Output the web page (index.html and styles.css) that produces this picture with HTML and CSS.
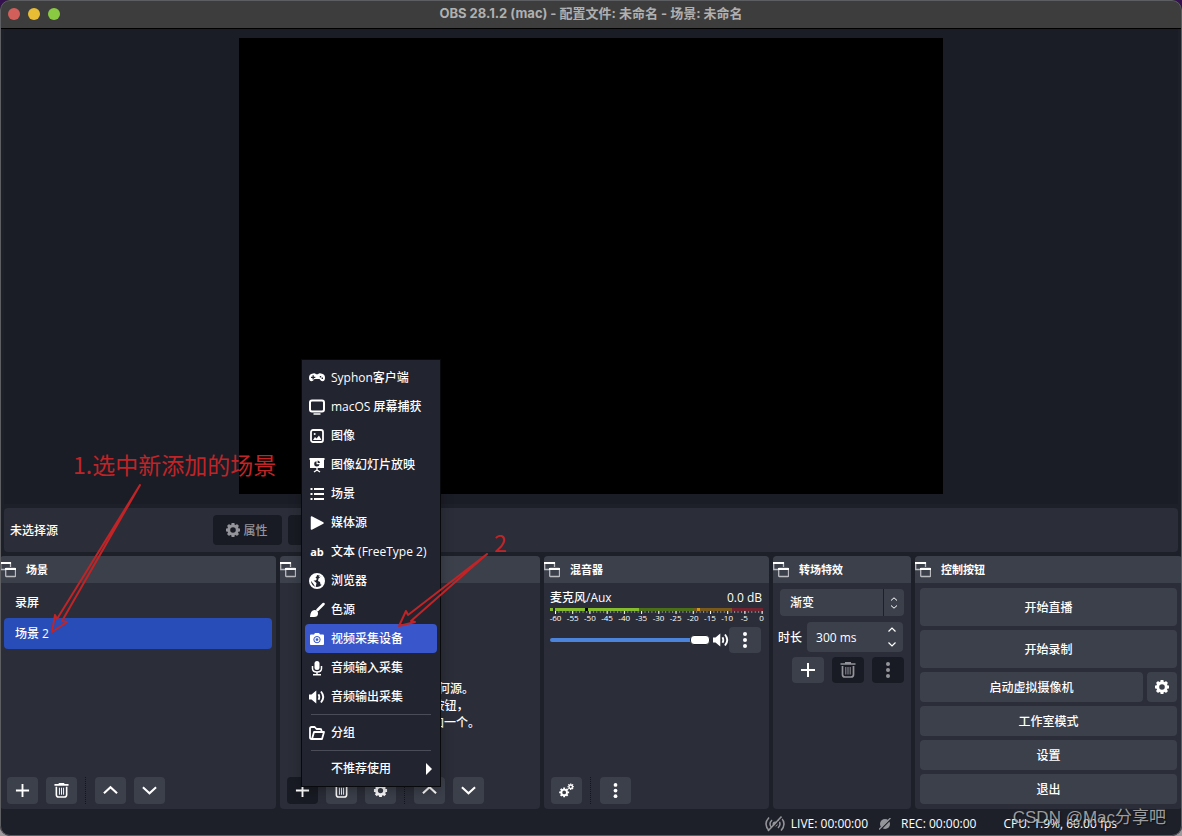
FILE: index.html
```html
<!DOCTYPE html>
<html lang="zh-CN">
<head>
<meta charset="utf-8">
<title>OBS 28.1.2 (mac)</title>
<link rel="stylesheet" href="styles.css">
</head>
<body>
<svg class="defs" aria-hidden="true">
  <defs>
    <symbol id="plus" viewBox="0 0 16 16"><path d="M8 1v14M1 8h14" fill="none" stroke="currentColor" stroke-width="2"/></symbol>
    <symbol id="trash" viewBox="0 0 16 16"><path d="M.5 2h15M5 .8h6M2.500 4v8.500q0 2.500 2.500 2.500h6q2.500 0 2.500-2.500V4" fill="none" stroke="currentColor" stroke-width="1.700"/><path d="M5.800 5v7.500M8 5v7.500M10.200 5v7.500" stroke="currentColor" stroke-width="1"/></symbol>
    <symbol id="up" viewBox="0 0 16 16"><path d="M1 11 8 4.500l7 6.500" fill="none" stroke="currentColor" stroke-width="2.200"/></symbol>
    <symbol id="down" viewBox="0 0 16 16"><path d="M1 4.500 8 11l7-6.500" fill="none" stroke="currentColor" stroke-width="2.200"/></symbol>
    <symbol id="dots" viewBox="0 0 16 16"><g fill="currentColor"><circle cx="8" cy="2" r="2"/><circle cx="8" cy="8" r="2"/><circle cx="8" cy="14" r="2"/></g></symbol>
    <symbol id="gear" viewBox="0 0 16 16"><circle cx="8" cy="8" r="4.300" fill="none" stroke="currentColor" stroke-width="3"/><path d="M8 1v2.500M8 12.500V15M1 8h2.500M12.500 8H15M3 3l1.800 1.800M11.200 11.200 13 13M3 13l1.800-1.800M11.200 4.800 13 3" stroke="currentColor" stroke-width="3"/></symbol>
    <symbol id="gears" viewBox="0 0 16 16"><circle cx="5.500" cy="10" r="3" fill="none" stroke="currentColor" stroke-width="2"/><path d="M5.500 4.700v2M5.500 13.300v2M.2 10h2M8.800 10h2M1.800 6.300l1.400 1.400M7.800 12.300l1.400 1.400M1.800 13.700l1.400-1.400M7.800 7.700l1.400-1.400" stroke="currentColor" stroke-width="2"/><circle cx="12.500" cy="4" r="1.900" fill="none" stroke="currentColor" stroke-width="1.400"/><path d="M12.500.5v1.400M12.500 6.100v1.400M9 4h1.400M14.600 4H16M10 1.500l1 1M14 5.500l1 1M10 6.500l1-1M14 2.500l1-1" stroke="currentColor" stroke-width="1.300"/></symbol>
    <symbol id="float" viewBox="0 0 16 16"><path d="M5 7.500H.7V1h9.800v4" fill="none" stroke="#b9bbc0" stroke-width="1.300"/><path d="M0 1h11" stroke="#fff" stroke-width="2"/><rect x="5.700" y="6.500" width="9.800" height="8" rx=".5" fill="none" stroke="#b9bbc0" stroke-width="1.300"/><path d="M5 7h11" stroke="#fff" stroke-width="2"/></symbol>
    <symbol id="speaker" viewBox="0 0 16 16"><path d="M0 5.500h2.500L7.300 1.500v13L2.500 10.500H0z" fill="currentColor"/><path d="M9.500 5.200q1.600 2.800 0 5.600M12 2.500q4.500 5.500 0 11" fill="none" stroke="currentColor" stroke-width="1.900"/></symbol>
  </defs>
</svg>
<div class="window">
  <header class="titlebar">
    <div class="lights"><i class="light red"></i><i class="light yellow"></i><i class="light green"></i></div>
    <h1>OBS 28.1.2 (mac) - 配置文件: 未命名 - 场景: 未命名</h1>
  </header>

  <main class="workspace">
    <section class="preview"><div class="canvas"></div></section>

    <section class="context">
      <span class="context-name">未选择源</span>
      <button class="btn context-btn" disabled><svg class="icon"><use href="#gear"/></svg>属性</button>
      <button class="btn context-btn" disabled><svg class="icon"><use href="#gear"/></svg>滤镜</button>
    </section>

    <div class="docks">
      <section class="dock">
        <h2><svg class="icon"><use href="#float"/></svg>场景</h2>
        <ul class="scenes"><li>录屏</li><li class="selected">场景 2</li></ul>
        <div class="toolbar">
          <button class="btn tool" aria-label="添加"><svg class="icon"><use href="#plus"/></svg></button>
          <button class="btn tool" aria-label="移除"><svg class="icon"><use href="#trash"/></svg></button>
          <i class="divider"></i>
          <button class="btn tool" aria-label="上移"><svg class="icon"><use href="#up"/></svg></button>
          <button class="btn tool" aria-label="下移"><svg class="icon"><use href="#down"/></svg></button>
        </div>
      </section>

      <section class="dock sources">
        <h2><svg class="icon"><use href="#float"/></svg>来源</h2>
        <p class="empty">您还没有添加任何源。<br>点击下面的 + 按钮，<br>或者右击此处添加一个。</p>
        <div class="toolbar">
          <button class="btn tool pressed" aria-label="添加"><svg class="icon"><use href="#plus"/></svg></button>
          <button class="btn tool" aria-label="移除"><svg class="icon"><use href="#trash"/></svg></button>
          <button class="btn tool" aria-label="属性"><svg class="icon"><use href="#gear"/></svg></button>
          <i class="divider"></i>
          <button class="btn tool" aria-label="上移"><svg class="icon"><use href="#up"/></svg></button>
          <button class="btn tool" aria-label="下移"><svg class="icon"><use href="#down"/></svg></button>
        </div>
        <div class="menu" role="menu">
          <button role="menuitem"><svg class="icon" viewBox="0 0 16 16"><path fill="currentColor" fill-rule="evenodd" d="M4 3.500q2-.5 3 .7h2q1-1.200 3-.7 4 .5 4 4.300 0 3.400-2.500 3.400-1.500 0-3-2.200h-5q-1.500 2.200-3 2.200Q0 11.200 0 7.800 0 4 4 3.500zM3.500 5.300v1.500H2V8h1.500v1.500h1.300V8h1.500V6.800H4.800V5.300zM10.800 6v1.500h1.400V6zM12.600 7.500V9H14V7.500z"/></svg>Syphon客户端</button>
          <button role="menuitem"><svg class="icon" viewBox="0 0 16 16"><rect x="1" y="1.500" width="14" height="11" rx="2" fill="none" stroke="currentColor" stroke-width="2"/><path d="M4.500 15h7" stroke="currentColor" stroke-width="1.500"/></svg>macOS 屏幕捕获</button>
          <button role="menuitem"><svg class="icon" viewBox="0 0 16 16"><rect x="2" y="2" width="12" height="12" rx="2" fill="none" stroke="currentColor" stroke-width="1.800"/><circle cx="5.700" cy="6" r="1" fill="currentColor"/><path d="m4 12 2-3 1.500 1.500L10 7.500l2.500 4.500z" fill="currentColor"/></svg>图像</button>
          <button role="menuitem"><svg class="icon" viewBox="0 0 16 16"><path d="M.5 1h15v2H15v8H1V3H.5z" fill="currentColor"/><path d="M8 11v3M5 15l3-2 3 2" fill="none" stroke="currentColor" stroke-width="1.400"/><path d="M7.500 4.200v3h3a2.700 2.700 0 1 1-3-3z" fill="#222430"/><path d="M8.600 3.400q2.200.3 2.500 2.600H8.600z" fill="#222430"/></svg>图像幻灯片放映</button>
          <button role="menuitem"><svg class="icon" viewBox="0 0 16 16"><path d="M5 3h10M5 8h10M5 13h10M1.500 3h2M1.500 8h2M1.500 13h2" stroke="currentColor" stroke-width="1.900"/></svg>场景</button>
          <button role="menuitem"><svg class="icon" viewBox="0 0 16 16"><path d="M2.500 2v12L14 8z" fill="currentColor" stroke="currentColor" stroke-width="1.500" stroke-linejoin="round"/></svg>媒体源</button>
          <button role="menuitem"><span class="icon ab">ab</span>文本 (FreeType 2)</button>
          <button role="menuitem"><svg class="icon" viewBox="0 0 16 16"><circle cx="8" cy="8" r="7" fill="none" stroke="currentColor" stroke-width="2"/><path d="M2 4Q4 1 7.500 1L8 3 6.500 4.500 8 6 6.500 7.500H4.500l3 2.500-1 4.500L4.500 11 2 8zM9.500 3l4 .5L15 8l-1.500 4-2-.5-.5-2.500L9 8l.5-2.500 1.500-1z" fill="currentColor"/></svg>浏览器</button>
          <button role="menuitem"><svg class="icon" viewBox="0 0 16 16"><path d="M1 15q.5-7 4.500-7Q9 8 9 11.500 9 15 5 15z" fill="currentColor"/><path d="M8.500 8 14.500 2" stroke="currentColor" stroke-width="2.500" stroke-linecap="round"/></svg>色源</button>
          <button role="menuitem" class="active"><svg class="icon" viewBox="0 0 16 16"><path fill="currentColor" fill-rule="evenodd" d="M2 3.500h3L6 2h4l1 1.500h3q1 0 1 1V13q0 1-1 1H2q-1 0-1-1V4.500q0-1 1-1zM8 5a3.600 3.600 0 1 0 .01 0z"/><circle cx="8" cy="8.600" r="2" fill="none" stroke="currentColor" stroke-width="1.200"/></svg>视频采集设备</button>
          <button role="menuitem"><svg class="icon" viewBox="0 0 16 16"><rect x="5.500" y="1" width="5" height="9" rx="2.500" fill="currentColor"/><path d="M3.500 6v2.500q0 3.500 4.500 3.500t4.500-3.500V6M8 12v3M4 14.700h8" fill="none" stroke="currentColor" stroke-width="1.500"/></svg>音频输入采集</button>
          <button role="menuitem"><svg class="icon"><use href="#speaker"/></svg>音频输出采集</button>
          <hr>
          <button role="menuitem"><svg class="icon" viewBox="0 0 16 16"><path d="M3 14H2.500Q1 14 1 12.500V3.500Q1 2 2.500 2h3.200l1.800 2H11q1.500 0 1.500 1.500V7M3 14l2-7h10l-2 7z" fill="none" stroke="currentColor" stroke-width="1.800" stroke-linejoin="round"/></svg>分组</button>
          <hr>
          <button role="menuitem"><span class="icon"></span>不推荐使用<svg class="submenu" viewBox="0 0 6 12"><path d="M0 0v12l6-6z" fill="currentColor"/></svg></button>
        </div>
      </section>

      <section class="dock">
        <h2><svg class="icon"><use href="#float"/></svg>混音器</h2>
        <div class="mixer">
          <div class="mixer-head"><label for="volume">麦克风/Aux</label><span>0.0 dB</span></div>
          <svg class="meter" viewBox="0 0 213 6" preserveAspectRatio="none" aria-hidden="true">
            <defs><pattern id="minor" x="5" width="3.444" height="6" patternUnits="userSpaceOnUse"><path d="M.5 3v2" stroke="#858790"/></pattern><pattern id="major" x="5" width="17.220" height="6" patternUnits="userSpaceOnUse"><path d="M.5 3v3" stroke="#fff"/></pattern></defs>
            <path fill="#84bc2e" d="M0 0h89v3H0z"/><path fill="#4c7019" d="M89 0h55v3H89z"/><path fill="#795a1c" d="M144 0h38v3h-38z"/><path fill="#712330" d="M182 0h31v3h-31z"/><path fill="#d49a12" d="M147 0h3v3h-3z"/><path fill="#000" d="M35 0h3v3h-3z"/><path fill="#22242d" d="M3 0h2v3H3z"/>
            <path fill="url(#minor)" d="M5 3h208v3H5z"/><path fill="url(#major)" d="M5 3h208v3H5z"/>
          </svg>
          <div class="scale"><span>-60</span><span>-55</span><span>-50</span><span>-45</span><span>-40</span><span>-35</span><span>-30</span><span>-25</span><span>-20</span><span>-15</span><span>-10</span><span>-5</span><span>0</span></div>
          <div class="volume">
            <input id="volume" type="range" min="0" max="100" value="100">
            <button class="mute" aria-label="静音"><svg class="icon"><use href="#speaker"/></svg></button>
            <button class="btn more" aria-label="更多"><svg class="icon"><use href="#dots"/></svg></button>
          </div>
        </div>
        <div class="toolbar">
          <button class="btn tool" aria-label="高级音频属性"><svg class="icon"><use href="#gears"/></svg></button>
          <i class="divider"></i>
          <button class="btn tool" aria-label="菜单"><svg class="icon"><use href="#dots"/></svg></button>
        </div>
      </section>

      <section class="dock">
        <h2><svg class="icon"><use href="#float"/></svg>转场特效</h2>
        <div class="transitions">
          <div class="combo">
            <select aria-label="转场特效"><option>渐变</option></select>
            <span class="combo-arrows"><svg viewBox="0 0 8 12"><path d="M1 3.500 4 .8l3 2.700M1 8.500l3 2.700 3-2.700" fill="none" stroke="currentColor"/></svg></span>
          </div>
          <div class="duration">
            <label for="duration">时长</label>
            <div class="spin">
              <input id="duration" type="text" value="300 ms">
              <div class="steps">
                <button aria-label="增加"><svg viewBox="0 0 8 5"><path d="M.5 4.500 4 1l3.500 3.500" fill="none" stroke="currentColor" stroke-width="1.200"/></svg></button>
                <button aria-label="减少"><svg viewBox="0 0 8 5"><path d="M.5.5 4 4 7.500.5" fill="none" stroke="currentColor" stroke-width="1.200"/></svg></button>
              </div>
            </div>
          </div>
          <div class="transition-tools">
            <button class="btn" aria-label="添加"><svg class="icon"><use href="#plus"/></svg></button>
            <button class="btn" disabled aria-label="移除"><svg class="icon"><use href="#trash"/></svg></button>
            <button class="btn" disabled aria-label="更多"><svg class="icon"><use href="#dots"/></svg></button>
          </div>
        </div>
      </section>

      <section class="dock">
        <h2><svg class="icon"><use href="#float"/></svg>控制按钮</h2>
        <div class="controls">
          <button class="btn tall">开始直播</button>
          <button class="btn tall">开始录制</button>
          <div class="pair"><button class="btn">启动虚拟摄像机</button><button class="btn square" aria-label="虚拟摄像机设置"><svg class="icon"><use href="#gear"/></svg></button></div>
          <button class="btn">工作室模式</button>
          <button class="btn">设置</button>
          <button class="btn">退出</button>
        </div>
      </section>
    </div>
  </main>

  <footer class="status">
    <span class="live"><svg viewBox="0 0 20 16"><path d="M4 1.500q-6 6.500 0 13M7 4q-4 4 0 8M16 1.500q6 6.500 0 13M13 4q4 4 0 8" fill="none" stroke="currentColor" stroke-width="1.500"/><circle cx="10" cy="8" r="2.500" fill="currentColor"/><path d="M4 16 17.500 1.500" stroke="#1e2029" stroke-width="1.500"/><path d="M3 15 16.500.5" stroke="currentColor" stroke-width="1.500"/></svg>LIVE: 00:00:00</span>
    <span class="rec"><svg viewBox="0 0 12 12"><circle cx="6" cy="6" r="5" fill="currentColor"/><path d="M1 12 12 1" stroke="#1e2029" stroke-width="1.500"/><path d="M0 11.500 11.500 0" stroke="currentColor" stroke-width="1.300"/></svg>REC: 00:00:00</span>
    <span class="cpu">CPU: 1.9%, 60.00 fps</span>
  </footer>

  <div class="note note-one">1.选中新添加的场景</div>
  <svg class="arrow arrow-one" viewBox="0 0 92 152" aria-hidden="true"><path d="M90 2 7 136l-2-4-3 17 15-10-5-1z"/></svg>
  <div class="note note-two">2</div>
  <svg class="arrow arrow-two" viewBox="0 0 94 76" aria-hidden="true"><path d="M89 3 10 64l-2-4-7 15 16-4-4-1z"/></svg>
  <div class="watermark">CSDN @Mac分享吧</div>
</div>
</body>
</html>
```

FILE: styles.css
```css
* { box-sizing: border-box; }
body {
  margin: 0;
  background: linear-gradient(#35124f, #a09a9c);
  color: #fff;
  font: 500 12px/17px "Open Sans", "Noto Sans CJK SC", sans-serif;
}
button, input, select { font: inherit; color: inherit; border: 0; margin: 0; padding: 0; background: none; }
h1, h2, p, ul { margin: 0; padding: 0; }
ul { list-style: none; }
.defs { position: absolute; width: 0; height: 0; }
.icon { width: 16px; height: 16px; flex: none; }

.window {
  position: relative;
  display: flex;
  flex-direction: column;
  min-height: 100vh;
  background: #1e2029;
  border-radius: 10px;
  overflow: hidden;
}
.window::after {
  content: "";
  position: absolute;
  inset: 0;
  border: 1px solid #5c5e62;
  border-radius: 10px;
  pointer-events: none;
}
.titlebar {
  position: relative;
  display: flex;
  align-items: center;
  justify-content: center;
  height: 29px;
  padding-bottom: 2px;
  background: #3d3d3d;
  border-bottom: 1px solid #000;
}
.titlebar h1 { font: 700 13px/18px Inter, "Noto Sans CJK SC", sans-serif; color: #b0b0b0; }
.lights { position: absolute; left: 8px; top: 8px; display: flex; gap: 8px; }
.light { width: 12px; height: 12px; border-radius: 50%; }
.red { background: #d35f5a; }
.yellow { background: #e8bd35; }
.green { background: #8aca42; }

.workspace { flex: 1; display: flex; flex-direction: column; gap: 4px; }
.preview {
  flex: 1;
  display: flex;
  justify-content: center;
  margin: 0 4px;
  padding: 9px 0 10px;
  background: #1b1d26;
}
.canvas { width: 60%; background: #000; }
.context {
  display: flex;
  align-items: center;
  gap: 6px;
  margin: 0 4px;
  padding: 7px 6px;
  background: #2b2d38;
  border-radius: 4px;
}
.context-name { width: 197px; }
.btn {
  display: flex;
  align-items: center;
  justify-content: center;
  height: 30px;
  background: #3c404b;
  border-radius: 4px;
}
.btn:disabled, .btn.pressed { background: #191b24; }
.btn:disabled { color: #94959a; }
.context-btn { width: 69px; gap: 2px; padding-right: 2px; }

.docks {
  display: grid;
  grid-template-columns: 276fr 260fr 225fr 138fr 267fr;
  gap: 4px;
}
.dock {
  position: relative;
  display: flex;
  flex-direction: column;
  min-width: 0;
  background: #2b2d38;
  border-radius: 4px;
}
.dock h2 {
  display: flex;
  align-items: center;
  gap: 10px;
  height: 27px;
  background: #3c404b;
  border-radius: 4px 4px 0 0;
  font-size: 11px;
  font-weight: 700;
}
.scenes { padding: 4px; }
.scenes li { padding: 7px 11px; border-radius: 4px; }
.scenes .selected { background: #284cb8; }
.toolbar { display: flex; gap: 8px; margin-top: auto; padding: 0 7px 5px; }
.tool { width: 31px; height: 27px; }
.tool .icon { width: 15px; height: 15px; }
.divider { width: 2px; border-left: 1px dotted #14161c; }

.empty { padding: 97px 0 0 8px; text-align: center; }
.menu {
  position: absolute;
  left: 22px;
  bottom: 23px;
  z-index: 2;
  width: 138px;
  padding: 3px;
  background: #222430;
  box-shadow: 0 0 0 1px #08090c, 0 4px 12px rgba(0, 0, 0, .3);
}
.menu button {
  display: flex;
  align-items: center;
  gap: 6px;
  width: 100%;
  height: 29px;
  padding: 0 5px 0 4px;
  border-radius: 4px;
  white-space: nowrap;
}
.menu .active { background: #3957cb; }
.menu hr { height: 1px; margin: 3px 6px; border: 0; background: #4a4c57; }
.ab { font-size: 11px; font-weight: 700; line-height: 16px; text-align: center; }
.submenu { width: 6px; height: 12px; margin-left: auto; }

.mixer { padding: 6px; }
.mixer-head { display: flex; justify-content: space-between; padding-right: 1px; }
.meter { display: block; width: 100%; height: 6px; margin-top: 2px; }
.scale {
  display: grid;
  grid-template-columns: repeat(13, 1fr);
  margin: 0 -7px 0 -3px;
  font-size: 8px;
  line-height: 8px;
  text-align: center;
}
.volume { display: flex; align-items: center; margin-top: 5px; }
#volume {
  appearance: none;
  flex: 1;
  min-width: 0;
  height: 4px;
  border-radius: 2px;
  background: #4c84dc;
}
#volume::-webkit-slider-thumb {
  appearance: none;
  width: 20px;
  height: 10px;
  background: #fff;
  border: 1px solid #22242d;
  border-radius: 4px;
}
.mute { display: flex; margin-left: 3px; }
.more { width: 32px; height: 26px; margin-right: 2px; }

.transitions { display: flex; flex-direction: column; padding: 6px 7px 6px 5px; }
.combo { position: relative; display: flex; margin-left: 2px; background: #3c404b; border-radius: 4px; }
.combo select { appearance: none; flex: 1; height: 27px; padding: 0 10px; }
.combo-arrows {
  display: flex;
  align-items: center;
  justify-content: center;
  width: 21px;
  border-left: 1px solid #1e2029;
  pointer-events: none;
}
.combo-arrows svg { width: 8px; height: 12px; }
.duration { display: flex; align-items: center; gap: 5px; margin-top: 6px; }
.duration label { flex: none; }
.spin { display: flex; flex: 1; min-width: 0; height: 30px; margin-right: 1px; background: #3c404b; border-radius: 4px; }
.spin input { flex: 1; min-width: 0; padding: 0 9px; }
.steps { display: flex; flex-direction: column; justify-content: space-around; width: 23px; }
.steps button { display: flex; justify-content: center; }
.steps svg { width: 8px; height: 5px; }
.transition-tools { display: flex; justify-content: flex-end; gap: 8px; margin-top: 5px; }
.transition-tools .btn { width: 32px; height: 26px; }

.controls { display: flex; flex-direction: column; gap: 4px; padding: 5px; }
.tall { height: 38px; }
.pair { display: flex; gap: 4px; }
.pair .btn { flex: 1; }
.pair .square { flex: none; width: 30px; }

.status {
  display: flex;
  align-items: center;
  justify-content: flex-end;
  height: 27px;
  padding: 2px 65px 0 0;
}
.status span { display: flex; align-items: center; }
.status svg { color: #94959a; }
.live svg { width: 20px; height: 16px; margin-right: 6px; }
.rec { margin-left: 11px; }
.rec svg { width: 12px; height: 12px; margin-right: 10px; }
.cpu { margin-left: 27px; }

.note {
  position: absolute;
  z-index: 3;
  color: #c02426;
  font: 400 23px/28px "Noto Sans CJK SC", sans-serif;
}
.note-one { left: 73px; top: 450px; }
.note-two { left: 494px; top: 528px; }
.arrow { position: absolute; z-index: 3; fill: none; stroke: #c02426; stroke-width: 2; stroke-linejoin: round; }
.arrow-one { left: 50px; top: 483px; width: 92px; height: 152px; }
.arrow-two { left: 398px; top: 551px; width: 94px; height: 76px; }
.watermark {
  position: absolute;
  right: 16px;
  bottom: 7px;
  color: rgba(200, 200, 200, .75);
  font: 17px/22px "Liberation Sans", "Noto Sans CJK SC", sans-serif;
  text-shadow: 1px 1px 1px rgba(0, 0, 0, .5);
}
```
